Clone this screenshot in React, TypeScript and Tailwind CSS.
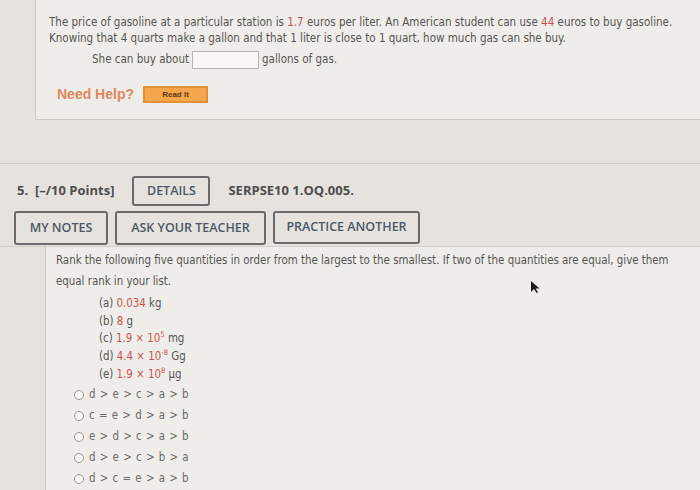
import React from 'react';

const Red = ({ children }: { children: React.ReactNode }) => (
  <span className="text-[#c9534c]">{children}</span>
);

const Sup = ({ children }: { children: React.ReactNode }) => (
  <sup className="text-[7.5px] -top-[5px]">{children}</sup>
);

const Radio = ({ label }: { label: string }) => (
  <div className="flex items-center h-[21px]">
    <span className="w-[10px] h-[10px] rounded-full border border-[#9a9893] bg-[#f7f6f3] mr-[5px]" />
    <span className="tracking-[0.5px]">{label}</span>
  </div>
);

const OutlineButton = ({ label, className }: { label: string; className: string }) => (
  <div
    className={`flex items-center justify-center border-2 border-[#6b6b6b] rounded-[3px] text-[#4c5866] font-['Open_Sans',sans-serif] font-semibold text-[12.5px] ${className}`}
  >
    {label}
  </div>
);

const App = () => {
  return (
    <div className="w-[700px] h-[490px] overflow-hidden bg-[#e6e3de] relative font-['DejaVu_Sans_Condensed','DejaVu_Sans',sans-serif] text-[#555]">
      {/* previous question */}
      <div className="ml-[35px] h-[120px] border-l border-b border-[#cdcac4] bg-[#efede9] pl-[13px] pt-[14px] text-[11.5px]">
        <p className="leading-[16px] whitespace-nowrap">
          The price of gasoline at a particular station is <Red>1.7</Red> euros per liter. An American student can use <Red>44</Red> euros to buy gasoline.
        </p>
        <p className="leading-[16px]">
          Knowing that 4 quarts make a gallon and that 1 liter is close to 1 quart, how much gas can she buy.
        </p>
        <div className="mt-[5px] ml-[43px] flex items-center h-[18px]">
          <span>She can buy about</span>
          <span className="w-[67px] h-[18px] border border-[#b8b6b1] bg-[#f8f7f5] mx-[3px]" />
          <span>gallons of gas.</span>
        </div>
        <div className="mt-[15px] ml-[8px] flex items-center">
          <span className="font-['Liberation_Sans',sans-serif] font-bold text-[14px] text-[#e0875b]">Need Help?</span>
          <span className="ml-[9px] w-[65px] h-[17px] flex items-center justify-center bg-[#f6a74b] border-2 border-[#e08f3a] text-[#5c3a12] font-['Liberation_Sans',sans-serif] font-bold text-[8px]">
            Read It
          </span>
        </div>
      </div>

      {/* question 5 */}
      <div className="mt-[43px] border-t border-[#d2cfc9]">
        <div className="pl-[17px] pt-[12px] flex items-center font-['Open_Sans',sans-serif] font-bold text-[13px] text-[#4d4d4d]">
          <span>5.&nbsp; [–/10 Points]</span>
          <OutlineButton label="DETAILS" className="ml-[18px] w-[78px] h-[30px] font-medium" />
          <span className="ml-[18px]">SERPSE10 1.OQ.005.</span>
        </div>
        <div className="pl-[14px] mt-[5px] flex gap-[7px] pb-[1px]">
          <OutlineButton label="MY NOTES" className="w-[94px] h-[34px]" />
          <OutlineButton label="ASK YOUR TEACHER" className="w-[151px] h-[34px]" />
          <OutlineButton label="PRACTICE ANOTHER" className="w-[147px] h-[33px]" />
        </div>

        <div className="border-t border-[#d2cfc9]">
          <div className="ml-[45px] h-[260px] border-l border-[#cdcac4] bg-[#efede9] pl-[10px] pt-[3px] text-[11.4px]">
            <p className="leading-[21px] whitespace-nowrap">
              Rank the following five quantities in order from the largest to the smallest. If two of the quantities are equal, give them
              <br />
              equal rank in your list.
            </p>
            <div className="ml-[43px] mt-[3px] leading-[17.7px]">
              <div>(a) <Red>0.034</Red> kg</div>
              <div>(b) <Red>8</Red> g</div>
              <div>(c) <Red>1.9 × 10<Sup>5</Sup></Red> mg</div>
              <div>(d) <Red>4.4 × 10<Sup>-8</Sup></Red> Gg</div>
              <div>(e) <Red>1.9 × 10<Sup>8</Sup></Red> µg</div>
            </div>
            <div className="ml-[18px] mt-[1px] text-[#6a6a6a]">
              <Radio label="d > e > c > a > b" />
              <Radio label="c = e > d > a > b" />
              <Radio label="e > d > c > a > b" />
              <Radio label="d > e > c > b > a" />
              <Radio label="d > c = e > a > b" />
            </div>
          </div>
        </div>
      </div>

      {/* mouse pointer */}
      <svg className="absolute left-[530px] top-[280px]" width="12" height="14" viewBox="0 0 12 14">
        <path d="M1 1 L1 12 L4 9 L6.5 13 L8 12.3 L5.6 8.4 L9.5 8.4 Z" fill="#1a1a1a" />
      </svg>
    </div>
  );
};

export default App;
